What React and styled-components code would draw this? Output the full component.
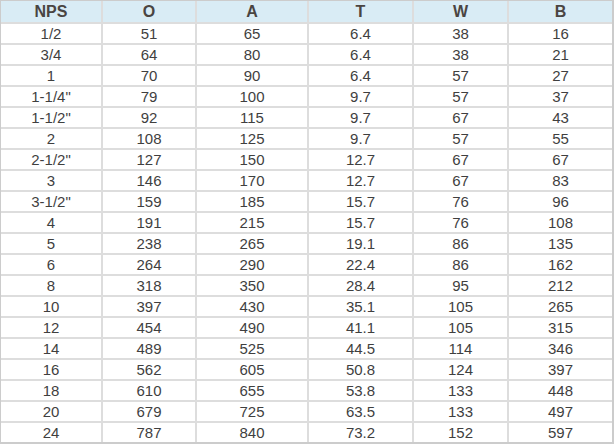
import styled, { createGlobalStyle } from "styled-components";

const GlobalStyle = createGlobalStyle`
  html, body {
    margin: 0;
    padding: 0;
    background: #ffffff;
  }
  body {
    font-family: "Liberation Sans", Arial, sans-serif;
    overflow: hidden;
  }
`;

const columns = [
  { key: "nps", label: "NPS", width: 100 },
  { key: "o", label: "O", width: 92 },
  { key: "a", label: "A", width: 110 },
  { key: "t", label: "T", width: 103 },
  { key: "w", label: "W", width: 93 },
  { key: "b", label: "B", width: 103 },
];

const rows = [
  ["1/2", "51", "65", "6.4", "38", "16"],
  ["3/4", "64", "80", "6.4", "38", "21"],
  ["1", "70", "90", "6.4", "57", "27"],
  ['1-1/4"', "79", "100", "9.7", "57", "37"],
  ['1-1/2"', "92", "115", "9.7", "67", "43"],
  ["2", "108", "125", "9.7", "57", "55"],
  ['2-1/2"', "127", "150", "12.7", "67", "67"],
  ["3", "146", "170", "12.7", "67", "83"],
  ['3-1/2"', "159", "185", "15.7", "76", "96"],
  ["4", "191", "215", "15.7", "76", "108"],
  ["5", "238", "265", "19.1", "86", "135"],
  ["6", "264", "290", "22.4", "86", "162"],
  ["8", "318", "350", "28.4", "95", "212"],
  ["10", "397", "430", "35.1", "105", "265"],
  ["12", "454", "490", "41.1", "105", "315"],
  ["14", "489", "525", "44.5", "114", "346"],
  ["16", "562", "605", "50.8", "124", "397"],
  ["18", "610", "655", "53.8", "133", "448"],
  ["20", "679", "725", "63.5", "133", "497"],
  ["24", "787", "840", "73.2", "152", "597"],
];

const Page = styled.div`
  margin: -1px 0 0 -1px;
`;

const Table = styled.table`
  width: 615px;
  table-layout: fixed;
  border-collapse: separate;
  border-spacing: 2px;
  background: #dddddd;
  box-shadow: inset 0 0 0 2px #cccccc;
`;

const HeadCell = styled.th`
  height: 21px;
  padding: 0;
  background: #d9ecf5;
  color: #4a4542;
  font-size: 16px;
  font-weight: 700;
  text-align: center;
  vertical-align: middle;
  line-height: 21px;
`;

const Cell = styled.td`
  height: 19px;
  padding: 0;
  background: #ffffff;
  color: #3f3f3f;
  font-size: 15px;
  text-align: center;
  vertical-align: middle;
  line-height: 19px;
`;

export default function App() {
  return (
    <Page>
      <GlobalStyle />
      <Table>
        <colgroup>
          {columns.map((c) => (
            <col key={c.key} style={{ width: c.width }} />
          ))}
        </colgroup>
        <thead>
          <tr>
            {columns.map((c) => (
              <HeadCell key={c.key}>{c.label}</HeadCell>
            ))}
          </tr>
        </thead>
        <tbody>
          {rows.map((r) => (
            <tr key={r[0]}>
              {r.map((v, i) => (
                <Cell key={columns[i].key}>{v}</Cell>
              ))}
            </tr>
          ))}
        </tbody>
      </Table>
    </Page>
  );
}
